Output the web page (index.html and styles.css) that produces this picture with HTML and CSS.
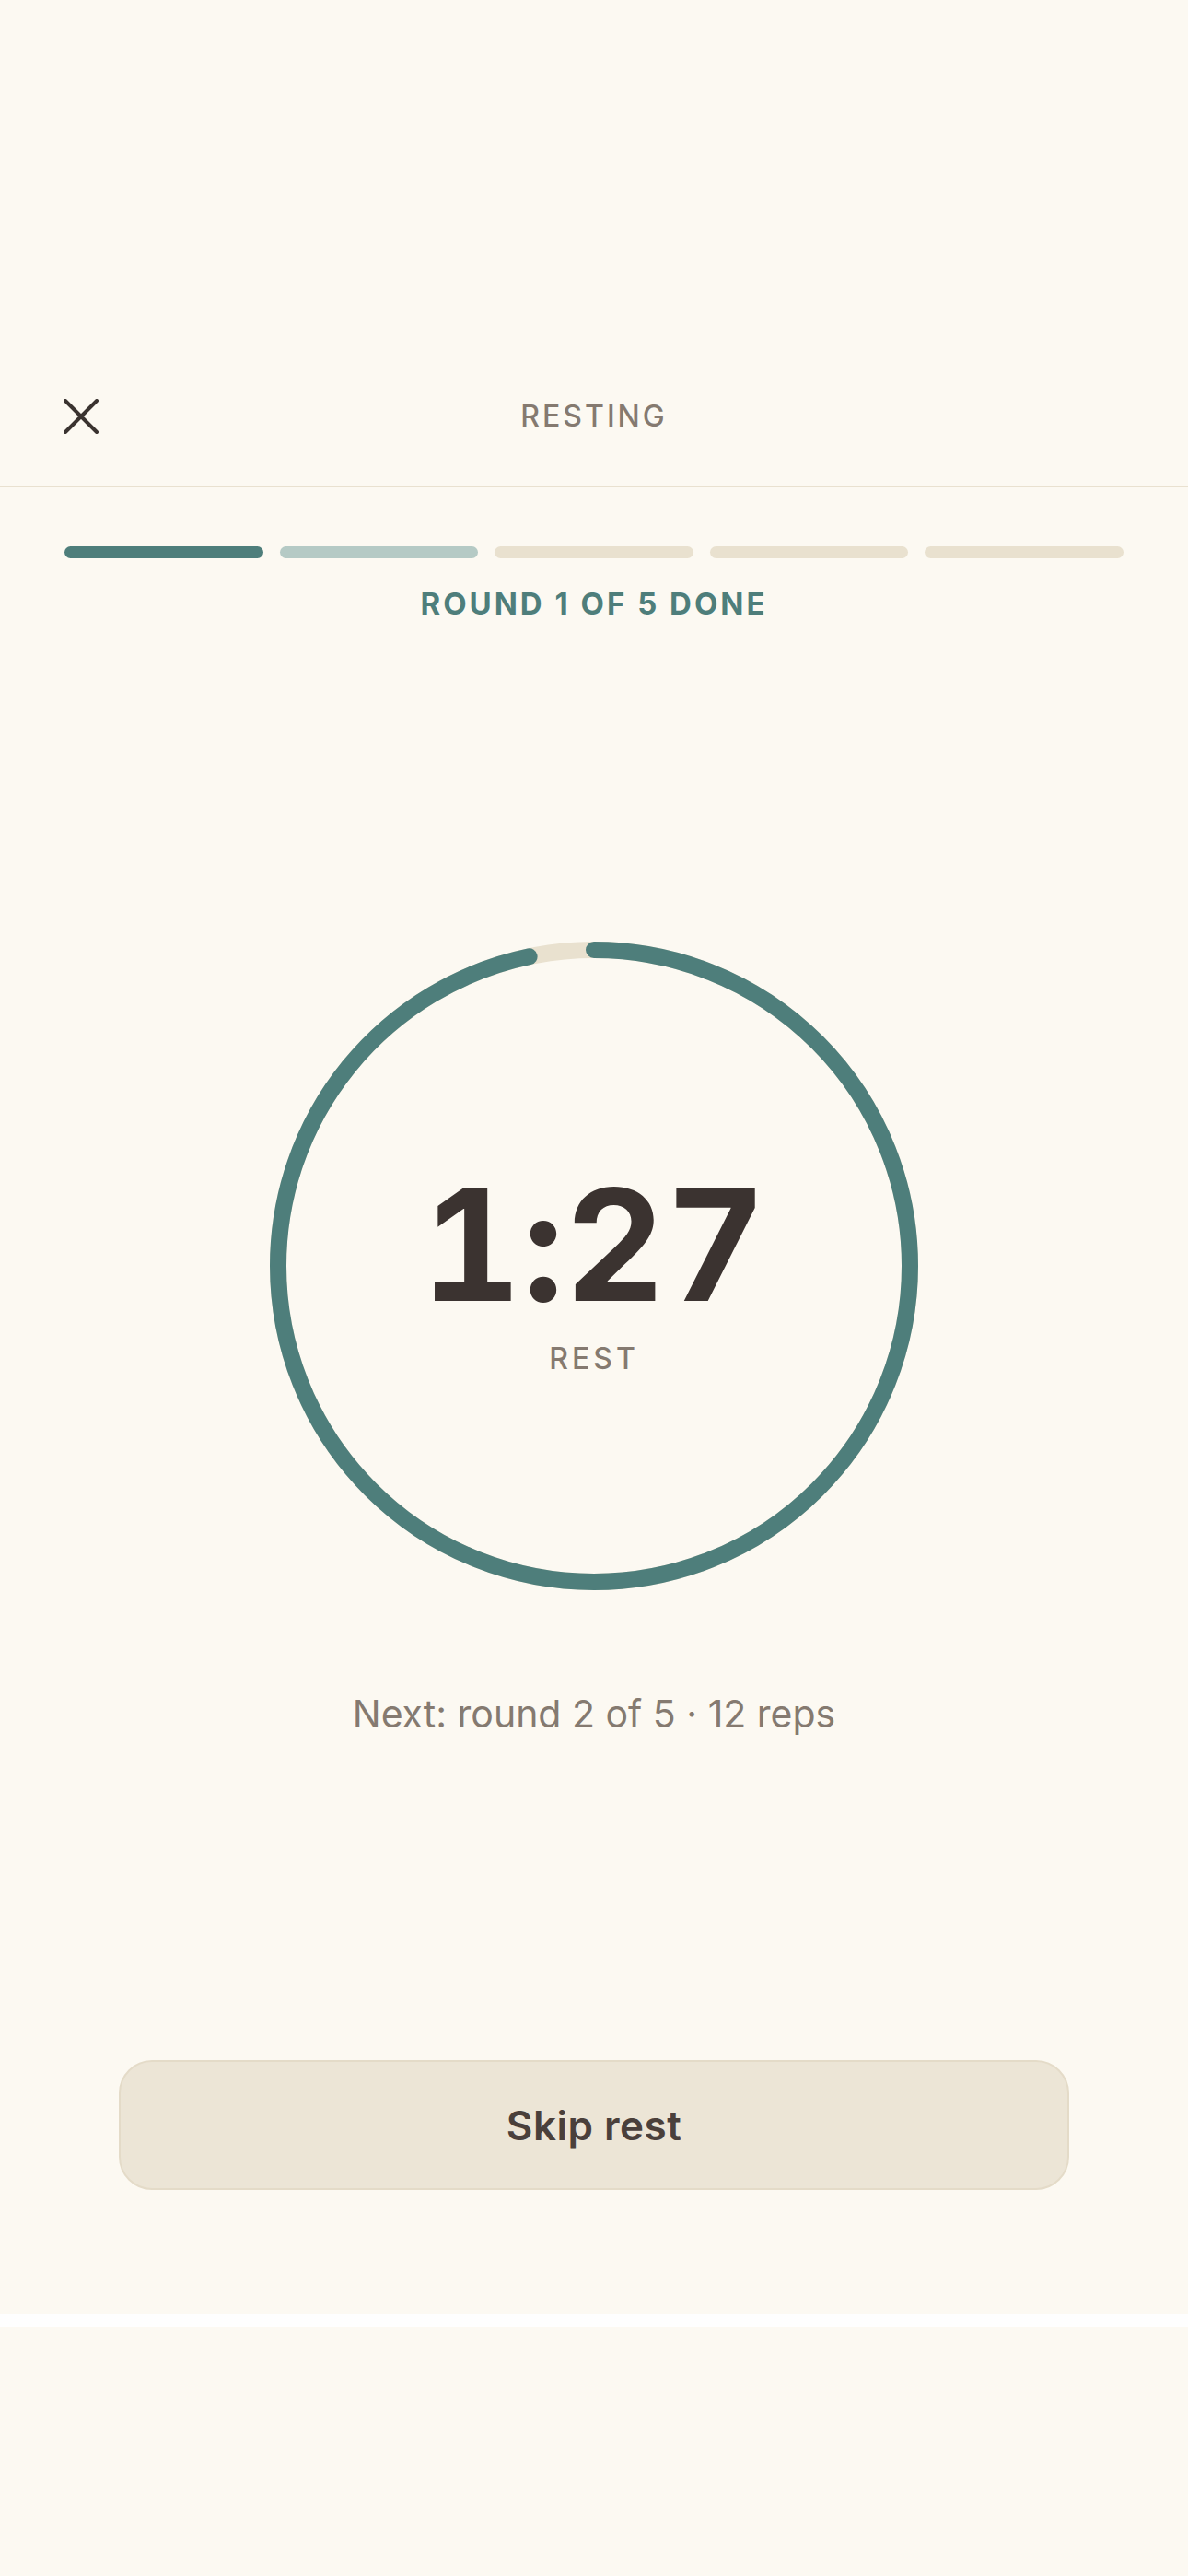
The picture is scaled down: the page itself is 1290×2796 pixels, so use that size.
FILE: index.html
```html
<!DOCTYPE html>
<html lang="en">
<head>
    <meta charset="UTF-8">
    <meta name="viewport" content="width=device-width, initial-scale=1.0">
    <title>Resting</title>
    <link rel="stylesheet" href="styles.css">
</head>
<body>
    <div class="screen">
        <div class="safe-top"></div>

        <!-- Top bar -->
        <header class="topbar">
            <button class="close" aria-label="Close">
                <svg width="38" height="38" viewBox="0 0 38 38">
                    <path d="M2 2 L36 36 M36 2 L2 36" stroke="#3a3330" stroke-width="4" stroke-linecap="round" fill="none"/>
                </svg>
            </button>
            <span class="title">RESTING</span>
        </header>

        <!-- Round progress -->
        <section class="rounds">
            <div class="round-bars">
                <span class="bar bar-done"></span>
                <span class="bar bar-upcoming"></span>
                <span class="bar"></span>
                <span class="bar"></span>
                <span class="bar"></span>
            </div>
            <p class="round-label">ROUND 1 OF 5 DONE</p>
        </section>

        <!-- Rest timer -->
        <section class="timer">
            <div class="ring">
                <svg class="ring-svg" width="704" height="704" viewBox="0 0 704 704">
                    <circle class="ring-track" cx="352" cy="352" r="343"/>
                    <circle class="ring-progress" cx="352" cy="352" r="343"
                            stroke-dasharray="2155.13" stroke-dashoffset="71.84"
                            transform="rotate(-90 352 352)"/>
                </svg>
                <div class="ring-text">
                    <div class="time">1:27</div>
                    <div class="ring-sub">REST</div>
                </div>
            </div>
            <p class="next-up">Next: round 2 of 5 · 12 reps</p>
        </section>

        <div class="actions">
            <button class="skip">Skip rest</button>
        </div>

        <div class="home-strip"></div>
    </div>
</body>
</html>
```

FILE: styles.css
```css
body {
    margin: 0;
    padding: 0;
    background-color: #fcf9f2;
    font-family: Inter, "Noto Sans", sans-serif;
    color: #3b3330;
}

.screen {
    min-height: 2796px;
    overflow: hidden;
}

.safe-top {
    height: 376px;
}

.topbar {
    height: 151px;
    display: grid;
    grid-template-columns: 1fr auto 1fr;
    align-items: center;
    padding: 0 69px;
    border-bottom: 2px solid #e9e1d0;
}

.close {
    justify-self: start;
    background: none;
    border: none;
    padding: 0;
    width: 38px;
    height: 38px;
    display: flex;
    cursor: pointer;
}

.title {
    font-size: 32px;
    font-weight: 500;
    letter-spacing: 3px;
    color: #857a70;
}

.rounds {
    padding: 64px 70px 0;
}

.round-bars {
    display: flex;
    gap: 18px;
}

.bar {
    flex: 1;
    height: 13px;
    border-radius: 7px;
    background-color: #e9e1cf;
}

.bar-done {
    background-color: #4e7e7b;
}

.bar-upcoming {
    background-color: #b5cac5;
}

.round-label {
    margin: 29px 0 0;
    text-align: center;
    font-size: 33px;
    line-height: 40px;
    font-weight: 700;
    letter-spacing: 3px;
    color: #4e7e7b;
}

.timer {
    display: flex;
    flex-direction: column;
    align-items: center;
}

.ring {
    margin-top: 347px;
    width: 704px;
    height: 704px;
    display: grid;
}

.ring-svg,
.ring-text {
    grid-area: 1 / 1;
}

.ring-track {
    fill: none;
    stroke: #e9e1cf;
    stroke-width: 18;
}

.ring-progress {
    fill: none;
    stroke: #4e7e7b;
    stroke-width: 18;
    stroke-linecap: round;
}

.ring-text {
    display: flex;
    flex-direction: column;
    align-items: center;
    justify-content: center;
    gap: 20px;
    padding-top: 14px;
}

.time {
    font-size: 168px;
    line-height: 168px;
    font-weight: 700;
    letter-spacing: 1px;
    font-feature-settings: "tnum" 1;
    color: #3b3330;
}

.ring-sub {
    font-size: 32px;
    line-height: 40px;
    font-weight: 500;
    letter-spacing: 4px;
    color: #857a70;
}

.next-up {
    margin: 109px 0 0;
    font-size: 41px;
    line-height: 50px;
    color: #857a70;
}

.actions {
    margin-top: 351px;
    display: flex;
    justify-content: center;
}

.skip {
    width: 1032px;
    height: 141px;
    box-sizing: border-box;
    background-color: #ece5d6;
    border: 2px solid #e4dbc8;
    border-radius: 36px;
    font-family: Inter, "Noto Sans", sans-serif;
    font-size: 44px;
    font-weight: 600;
    letter-spacing: 0.5px;
    color: #4a403b;
    cursor: pointer;
}

.home-strip {
    margin-top: 135px;
    height: 14px;
    background-color: #fefefe;
}
```
